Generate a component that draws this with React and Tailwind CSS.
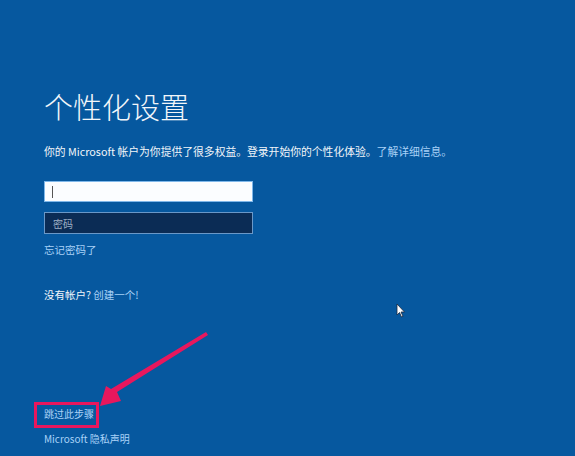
import React from "react";

const font = { fontFamily: '"Noto Sans CJK SC", "Noto Sans", sans-serif' };

function Arrow() {
  return (
    <svg className="absolute left-0 top-0 pointer-events-none" width="575" height="456" viewBox="0 0 575 456">
      <polygon points="206,332 208,335 117,392 121,401 100,406 106,386 111,389" fill="#e8175d" />
    </svg>
  );
}

function Cursor() {
  return (
    <svg className="absolute left-[396px] top-[303px]" width="10" height="15" viewBox="0 0 10 15">
      <path d="M1 1 L1 12 L3.5 9.5 L5.5 14 L7 13.3 L5 9 L8.5 9 Z" fill="#fff" stroke="#1a2a40" strokeWidth="0.8" />
    </svg>
  );
}

export default function App() {
  return (
    <div className="relative w-[575px] h-[456px] overflow-hidden bg-[#06589f] text-white" style={font}>
      <div className="flex flex-col pl-[44px] pt-[91px]">
        <h1 className="text-[29px] leading-[30px] font-light text-[#f2f6fa]">个性化设置</h1>
        <p className="mt-[23px] text-[10.8px] leading-[14px] text-[#f2f6fa] whitespace-nowrap">
          你的 Microsoft 帐户为你提供了很多权益。登录开始你的个性化体验。
          <span className="text-[#a9d2f7]">了解详细信息。</span>
        </p>
        <div className="mt-[23px] w-[209px] h-[21px] bg-[#fbfdff] border border-[#7fb8ea] flex items-center pl-[7px]">
          <div className="w-px h-[12px] bg-[#555]"></div>
        </div>
        <div className="mt-[10px] w-[209px] h-[22px] bg-[#0b2c55] border border-[#6a98c8] flex items-center pl-[8px] text-[10px] text-[#9fb0c6]">
          密码
        </div>
        <a className="mt-[9px] text-[10.5px] leading-[14px] text-[#a9d2f7]">忘记密码了</a>
        <p className="mt-[31px] text-[10.5px] leading-[14px] text-[#f2f6fa]">
          没有帐户? <span className="text-[#a9d2f7]">创建一个!</span>
        </p>
        <div className="relative mt-[105px] w-fit">
          <a className="block text-[10px] leading-[14px] text-[#a9d2f7]">跳过此步骤</a>
          <div className="absolute left-[-10px] top-[-5px] w-[65px] h-[26px] border-[3px] border-[#e8175d]"></div>
        </div>
        <p className="mt-[11px] text-[10px] leading-[14px] text-[#a9d2f7]">Microsoft 隐私声明</p>
      </div>
      <Arrow />
      <Cursor />
    </div>
  );
}
